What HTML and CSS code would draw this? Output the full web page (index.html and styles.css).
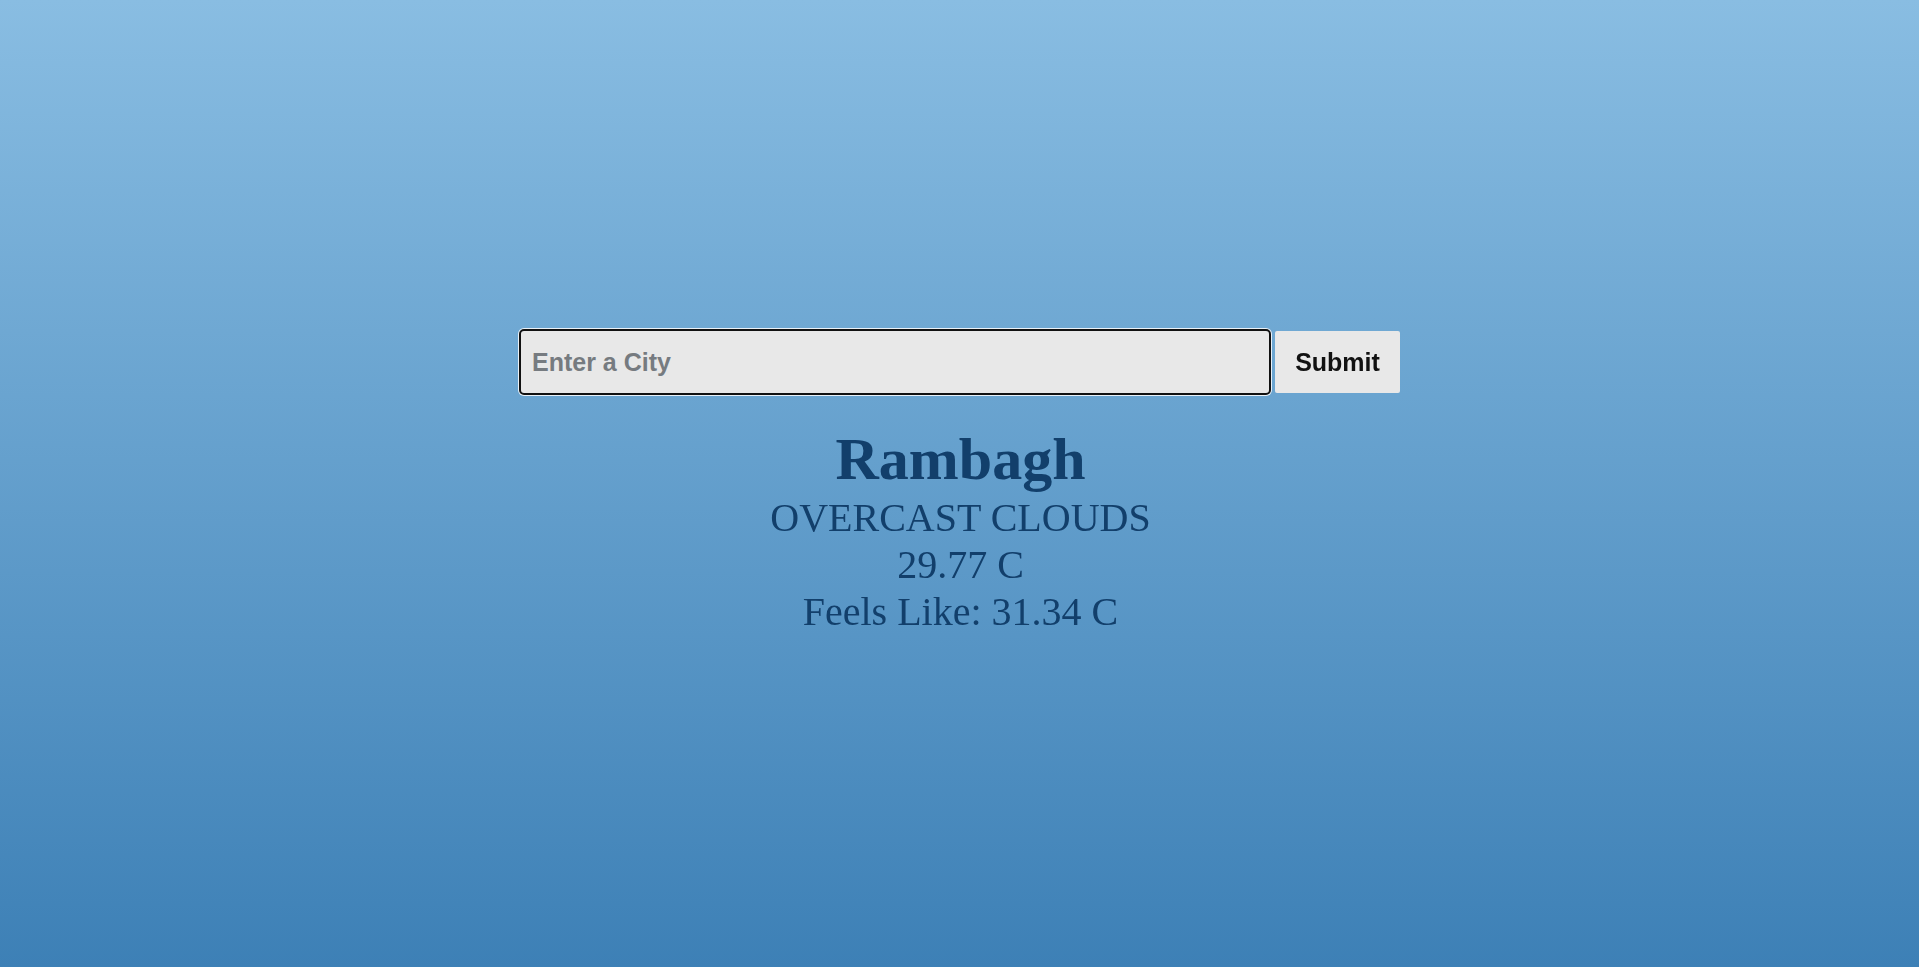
FILE: index.html
```html
<!DOCTYPE html>
<html lang="en">
<head>
<meta charset="utf-8">
<title>Weather</title>
<link rel="stylesheet" href="styles.css">
</head>
<body>
<main class="app">
  <form class="search">
    <input class="search-input" type="text" placeholder="Enter a City" autofocus>
    <button class="search-btn" type="button">Submit</button>
  </form>
  <section class="weather">
    <h1 class="city">Rambagh</h1>
    <p class="line desc">Overcast Clouds</p>
    <p class="line">29.77 C</p>
    <p class="line">Feels Like: 31.34 C</p>
  </section>
</main>
</body>
</html>
```
FILE: styles.css
```css
html, body {
  margin: 0;
  padding: 0;
  height: 100%;
}
body {
  background: linear-gradient(to bottom, #89bde2 0%, #3d80b6 100%);
  font-family: "Liberation Serif", "Times New Roman", serif;
  color: #123f6b;
}
.app {
  display: flex;
  flex-direction: column;
  align-items: center;
  padding-top: 331px;
  padding-left: 2px;
}
.search {
  display: flex;
  gap: 6px;
  margin: 0;
}
.search-input {
  width: 748px;
  height: 62px;
  box-sizing: border-box;
  border: none;
  border-radius: 3px;
  background: #e8e8e8;
  padding: 0 11px;
  font-family: "Liberation Sans", Arial, sans-serif;
  font-weight: bold;
  font-size: 25px;
  color: #111;
  outline: 2px solid #111;
  box-shadow: 0 0 0 3px #e9f1f8;
}
.search-input::placeholder {
  color: #767b80;
  opacity: 1;
}
.search-btn {
  width: 125px;
  height: 62px;
  border: none;
  border-radius: 2px;
  background: #e8e8e8;
  font-family: "Liberation Sans", Arial, sans-serif;
  font-weight: bold;
  font-size: 25px;
  color: #111;
  padding: 0;
}
.weather {
  margin-top: 32px;
  text-align: center;
}
.city {
  margin: 0;
  font-size: 60px;
  font-weight: bold;
}
.line {
  margin: 0;
  font-size: 40px;
}
.desc {
  text-transform: uppercase;
}
```
